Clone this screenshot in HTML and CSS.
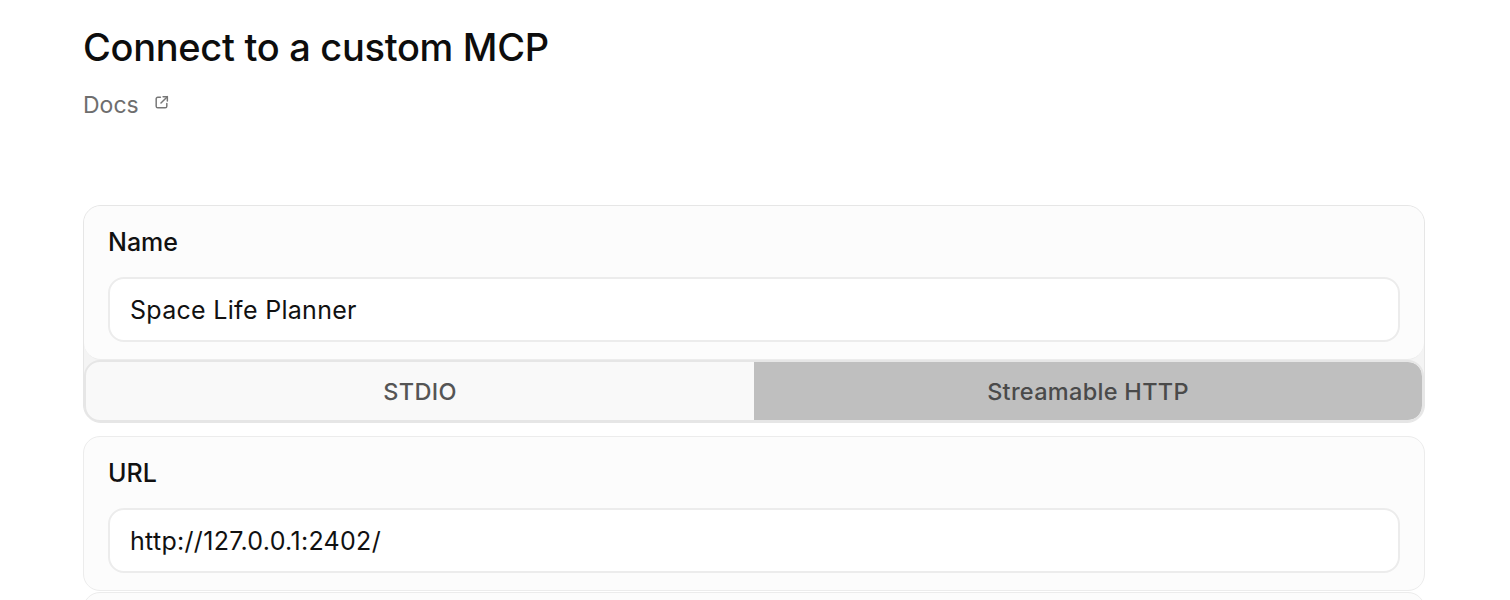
FILE: index.html
```html
<!DOCTYPE html>
<html lang="en">
<head>
<meta charset="utf-8">
<title>Connect to a custom MCP</title>
<link rel="stylesheet" href="styles.css">
</head>
<body>
<main class="page">
  <header class="head">
    <h1 class="title">Connect to a custom MCP</h1>
    <a class="docs" href="#">Docs
      <svg class="ext" viewBox="0 0 16 16" width="16" height="16" fill="none" stroke="currentColor" stroke-width="1.4" stroke-linecap="round" stroke-linejoin="round">
        <path d="M7 3H4.5A1.5 1.5 0 0 0 3 4.5v7A1.5 1.5 0 0 0 4.5 13h7a1.5 1.5 0 0 0 1.5-1.5V9"/>
        <path d="M9.5 2.5h4v4"/>
        <path d="M13.5 2.5 7.5 8.5"/>
      </svg>
    </a>
  </header>

  <section class="group">
    <div class="card">
      <label class="label">Name</label>
      <div class="input">Space Life Planner</div>
    </div>
    <div class="toggle">
      <div class="seg">STDIO</div>
      <div class="seg active">Streamable HTTP</div>
    </div>
  </section>

  <section class="card solo">
    <label class="label">URL</label>
    <div class="input">http://127.0.0.1:2402/</div>
  </section>

  <section class="card solo next"></section>
</main>
</body>
</html>
```

FILE: styles.css
```css
html, body {
  margin: 0;
  background: #ffffff;
}
body {
  font-family: Inter, "Noto Sans", "Liberation Sans", sans-serif;
  color: #111111;
  overflow: hidden;
}
.page {
  padding: 24px 85px 0 83px;
  display: flex;
  flex-direction: column;
}
.head {
  display: flex;
  flex-direction: column;
  gap: 21px;
  margin-bottom: 86px;
}
.title {
  margin: 0;
  font-size: 38px;
  line-height: 46px;
  font-weight: 500;
  letter-spacing: -0.3px;
  color: #0d0d0d;
}
.docs {
  display: inline-flex;
  align-items: center;
  gap: 14px;
  font-size: 23px;
  line-height: 28px;
  color: #6e6e6e;
  text-decoration: none;
  width: max-content;
}
.ext {
  width: 17px;
  height: 17px;
  color: #777777;
  margin-top: -5px;
}
.group {
  border: 1px solid #e6e6e6;
  border-radius: 18px;
  background: #f4f4f4;
  display: flex;
  flex-direction: column;
}
.card {
  background: #fcfcfc;
  border-radius: 17px;
  padding: 22px 24px 17px 24px;
  display: flex;
  flex-direction: column;
  gap: 20px;
  border-bottom: 1px solid #ececec;
}
.card.solo {
  border: 1px solid #ececec;
  margin-top: 13px;
}
.card.next {
  margin-top: 1px;
  height: 60px;
  padding: 0;
}
.label {
  font-size: 25px;
  line-height: 29px;
  font-weight: 500;
  color: #111111;
}
.input {
  height: 61px;
  border: 2px solid #ececec;
  border-radius: 16px;
  background: #ffffff;
  padding: 0 20px;
  display: flex;
  align-items: center;
  font-size: 25px;
  letter-spacing: 0.3px;
  color: #111111;
}
.toggle {
  display: grid;
  grid-template-columns: 1fr 1fr;
  border: 2px solid #e6e6e6;
  border-radius: 16px;
  background: #f9f9f9;
  height: 58px;
  overflow: hidden;
}
.seg {
  display: flex;
  align-items: center;
  justify-content: center;
  font-size: 23.5px;
  font-weight: 500;
  color: #555555;
  letter-spacing: 0.3px;
}
.seg.active {
  background: #bfbfbf;
  border-radius: 0 14px 14px 0;
  color: #4a4a4a;
}
```
